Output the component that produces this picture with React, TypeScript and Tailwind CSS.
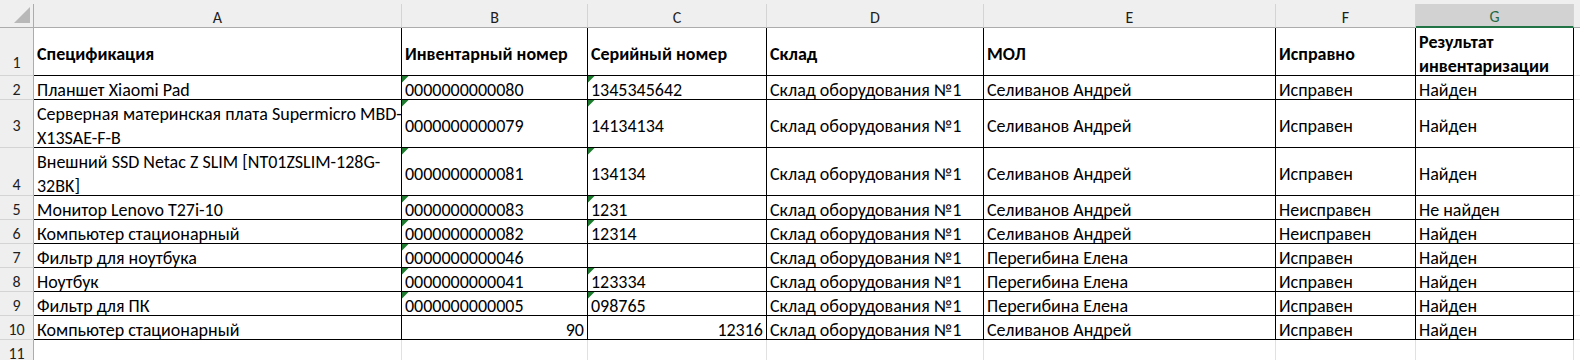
import React from "react";

type Cell = string | string[];
type Row = { h: 24 | 48; label: string; labelPos: "c" | "b" | "b1" | "m3"; cells: Cell[]; tri: [boolean, boolean]; right?: boolean };

const colW = [
  "w-[368px]",
  "w-[186px]",
  "w-[179px]",
  "w-[217px]",
  "w-[292px]",
  "w-[140px]",
  "w-[158px]",
];
const letters = ["A", "B", "C", "D", "E", "F", "G"];

const S = "Склад оборудования №1";
const rows: Row[] = [
  { h: 24, label: "2", labelPos: "c", cells: ["Планшет Xiaomi Pad", "0000000000080", "1345345642", S, "Селиванов Андрей", "Исправен", "Найден"], tri: [true, true] },
  { h: 48, label: "3", labelPos: "m3", cells: [["Серверная материнская плата Supermicro MBD-", "X13SAE-F-B"], "0000000000079", "14134134", S, "Селиванов Андрей", "Исправен", "Найден"], tri: [true, true] },
  { h: 48, label: "4", labelPos: "b", cells: [["Внешний SSD Netac Z SLIM [NT01ZSLIM-128G-", "32BK]"], "0000000000081", "134134", S, "Селиванов Андрей", "Исправен", "Найден"], tri: [true, true] },
  { h: 24, label: "5", labelPos: "c", cells: ["Монитор Lenovo T27i-10", "0000000000083", "1231", S, "Селиванов Андрей", "Неисправен", "Не найден"], tri: [true, true] },
  { h: 24, label: "6", labelPos: "c", cells: ["Компьютер стационарный", "0000000000082", "12314", S, "Селиванов Андрей", "Неисправен", "Найден"], tri: [true, true] },
  { h: 24, label: "7", labelPos: "c", cells: ["Фильтр для ноутбука", "0000000000046", "", S, "Перегибина Елена", "Исправен", "Найден"], tri: [true, false] },
  { h: 24, label: "8", labelPos: "c", cells: ["Ноутбук", "0000000000041", "123334", S, "Перегибина Елена", "Исправен", "Найден"], tri: [true, true] },
  { h: 24, label: "9", labelPos: "c", cells: ["Фильтр для ПК", "0000000000005", "098765", S, "Перегибина Елена", "Исправен", "Найден"], tri: [true, true] },
  { h: 24, label: "10", labelPos: "c", cells: ["Компьютер стационарный", "90", "12316", S, "Селиванов Андрей", "Исправен", "Найден"], tri: [false, false], right: true },
];

const headers: Cell[] = ["Спецификация", "Инвентарный номер", "Серийный номер", "Склад", "МОЛ", "Исправно", ["Результат", "инвентаризации"]];

function Triangle() {
  return (
    <svg className="absolute left-0 top-0" width="7" height="7" viewBox="0 0 7 7">
      <polygon points="0,0 6.5,0 0,6.5" fill="#1d7a2e" />
    </svg>
  );
}

function RowLabel({ label, pos, h }: { label: string; pos: "c" | "b" | "b1" | "m3"; h: number }) {
  const base =
    "w-[34px] shrink-0 bg-[#efefef] border-r border-r-[#acacac] border-b border-b-[#d4d4d4] flex justify-center text-[16px] text-[#1e1e1e] leading-[20px]";
  const hc = h === 48 ? "h-[48px]" : "h-[24px]";
  const posc =
    pos === "b"
      ? "items-end"
      : pos === "b1"
      ? "items-end pb-[2px]"
      : pos === "m3"
      ? "items-start pt-[16px]"
      : "items-center pt-[4px]";
  return <div className={`${base} ${hc} ${posc}`}>{label}</div>;
}

function Content({ c }: { c: Cell }) {
  if (Array.isArray(c)) {
    return (
      <div className="flex flex-col">
        {c.map((l, i) => (
          <span key={i} className="whitespace-nowrap">{l}</span>
        ))}
      </div>
    );
  }
  return <span className="whitespace-nowrap">{c}</span>;
}

export default function App() {
  return (
    <div className="w-[1580px] h-[360px] overflow-hidden bg-white font-[Carlito,Calibri,sans-serif] text-black">
      {/* Column headers */}
      <div className="flex h-[28px] bg-[#efefef] pt-[4px]">
        <div className="relative w-[34px] shrink-0 h-[24px] border-r border-r-[#acacac] border-b border-b-[#acacac]">
          <svg className="absolute left-[14px] top-[3px]" width="17" height="17" viewBox="0 0 17 17">
            <polygon points="16,0 16,16 0,16" fill="#b8b8b8" />
          </svg>
        </div>
        {letters.map((l, i) =>
          l === "G" ? (
            <div
              key={l}
              className={`${colW[i]} shrink-0 h-[24px] bg-[#d2d2d2] border-r border-r-[#d4d4d4] border-b-2 border-b-[#217346] flex items-center justify-center pt-[4px] text-[16px] leading-[20px] text-[#1f6b41]`}
            >
              {l}
            </div>
          ) : (
            <div
              key={l}
              className={`${colW[i]} shrink-0 h-[24px] border-r border-r-[#d4d4d4] border-b border-b-[#acacac] flex items-center justify-center pt-[4px] text-[16px] leading-[20px] text-[#1e1e1e]`}
            >
              {l}
            </div>
          )
        )}
        <div className="flex-1 h-[24px] border-b border-b-[#acacac]" />
      </div>

      {/* Row 1 */}
      <div className="flex h-[48px]">
        <RowLabel label="1" pos="b1" h={48} />
        {headers.map((c, i) => (
          <div
            key={i}
            className={`${colW[i]} shrink-0 h-[48px] border-r border-b border-black flex items-center pt-[4px] pl-[3px] text-[18px] leading-[24px] font-bold`}
          >
            <Content c={c} />
          </div>
        ))}
        <div className="flex-1 h-[48px] border-b border-b-[#e1e1e1]" />
      </div>

      {rows.map((r) => {
        const hc = r.h === 48 ? "h-[48px]" : "h-[24px]";
        return (
          <div key={r.label} className={`flex ${hc}`}>
            <RowLabel label={r.label} pos={r.labelPos} h={r.h} />
            {r.cells.map((c, i) => {
              const isRight = r.right && (i === 1 || i === 2);
              const tri = (i === 1 && r.tri[0]) || (i === 2 && r.tri[1]);
              return (
                <div
                  key={i}
                  className={`${colW[i]} ${hc} relative shrink-0 border-r border-b border-black flex items-center pt-[4px] text-[18px] leading-[24px] ${
                    isRight ? "justify-end pr-[3px]" : "pl-[3px]"
                  }`}
                >
                  {tri && <Triangle />}
                  <Content c={c} />
                </div>
              );
            })}
            <div className={`flex-1 ${hc} border-b border-b-[#e1e1e1]`} />
          </div>
        );
      })}

      {/* Row 11 */}
      <div className="flex h-[24px]">
        <RowLabel label="11" pos="c" h={24} />
        {colW.map((w, i) => (
          <div key={i} className={`${w} h-[24px] shrink-0 border-r border-r-[#e1e1e1] border-b border-b-[#e1e1e1]`} />
        ))}
        <div className="flex-1 h-[24px] border-b border-b-[#e1e1e1]" />
      </div>
    </div>
  );
}
